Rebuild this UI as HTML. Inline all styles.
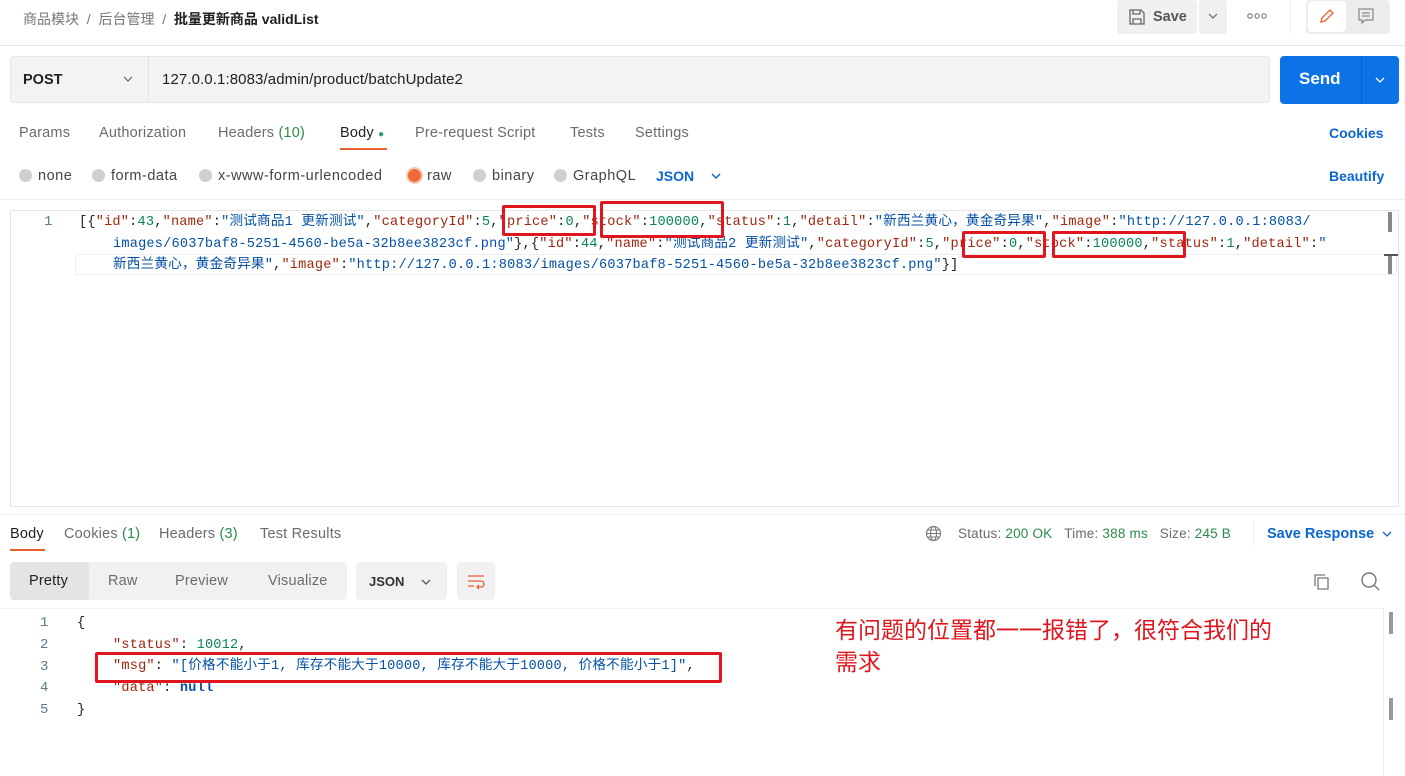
<!DOCTYPE html>
<html><head><meta charset="utf-8"><style>
*{margin:0;padding:0;box-sizing:border-box}
body{width:1405px;height:776px;background:#fff;font-family:"Liberation Sans","Noto Sans CJK SC",sans-serif;position:relative;overflow:hidden;color:#212121}
.a{position:absolute;white-space:nowrap}
.g{color:#6b6b6b}
.t{font-size:14.5px;letter-spacing:0.2px}
.r{font-size:14.5px;letter-spacing:0.5px;color:#444;line-height:16px}
.code{font-family:"Liberation Mono","Noto Sans CJK SC",monospace;font-size:13.6px;letter-spacing:0.2px;line-height:18px;height:18px}
.k{color:#a1260d}.s{color:#0451a5}.n{color:#098658}.b{color:#0451a5;font-weight:bold}
.box{position:absolute;border:3px solid #e0161e;border-radius:2px}
.ln{color:#5b7a8a;font-family:"Liberation Mono",monospace;font-size:14px}
.rad{display:inline-block;width:13px;height:13px;border-radius:50%;background:#cfcfcf;vertical-align:-2px;margin-right:6px}
</style></head><body>
<div class="a" style="left:23px;top:9px;font-size:14px;color:#777">商品模块 &nbsp;/&nbsp; 后台管理 &nbsp;/&nbsp; <b style="color:#212121">批量更新商品 validList</b></div>
<div class="a" style="left:1117px;top:0;width:80px;height:34px;background:#f0f0f0;border-radius:3px"></div>
<svg class="a" style="left:1128px;top:8px" width="18" height="18" viewBox="0 0 18 18"><path d="M2 2h11l3 3v11H2z M5 2v4h7V2 M5 16v-5h8v5" fill="none" stroke="#666" stroke-width="1.3"/></svg>
<div class="a" style="left:1153px;top:9px;font-size:14.5px;font-weight:bold;color:#555">Save</div>
<div class="a" style="left:1199px;top:0;width:28px;height:34px;background:#f0f0f0;border-radius:3px"></div>
<svg class="a" style="left:1207px;top:12px" width="12" height="8" viewBox="0 0 12 8"><path d="M2 2l4 4 4-4" fill="none" stroke="#666" stroke-width="1.2"/></svg>
<svg class="a" style="left:1247px;top:13px" width="20" height="6" viewBox="0 0 20 6"><g fill="none" stroke="#666" stroke-width="1"><circle cx="3" cy="3" r="2.2"/><circle cx="10" cy="3" r="2.2"/><circle cx="17" cy="3" r="2.2"/></g></svg>
<div class="a" style="left:1290px;top:0;width:1px;height:34px;background:#eee"></div>
<div class="a" style="left:1306px;top:0;width:84px;height:34px;background:#ececec;border-radius:4px"></div>
<div class="a" style="left:1308px;top:1px;width:38px;height:31px;background:#fff;border-radius:4px"></div>
<svg class="a" style="left:1318px;top:7px" width="18" height="18" viewBox="0 0 18 18"><path d="M3 15l1-4 8-8 3 3-8 8z" fill="none" stroke="#e8622f" stroke-width="1.3"/></svg>
<svg class="a" style="left:1357px;top:7px" width="18" height="18" viewBox="0 0 18 18"><path d="M2 2h14v11H8l-3 3v-3H2z M5 6h8 M5 9h8" fill="none" stroke="#888" stroke-width="1.2"/></svg>
<div class="a" style="left:0;top:45px;width:1405px;height:1px;background:#e6e6e6"></div>
<div class="a" style="left:10px;top:56px;width:1260px;height:47px;background:#f3f3f3;border:1px solid #e6e6e6;border-radius:4px"></div>
<div class="a" style="left:148px;top:56px;width:1px;height:47px;background:#e2e2e2"></div>
<div class="a" style="left:23px;top:72px;font-size:14.5px;font-weight:bold">POST</div>
<svg class="a" style="left:122px;top:75px" width="12" height="8" viewBox="0 0 12 8"><path d="M2 2l4 4 4-4" fill="none" stroke="#666" stroke-width="1.2"/></svg>
<div class="a" style="left:162px;top:71px;font-size:15px;letter-spacing:0.1px">127.0.0.1:8083/admin/product/batchUpdate2</div>
<div class="a" style="left:1280px;top:56px;width:119px;height:48px;background:#0c73e6;border-radius:4px"></div>
<div class="a" style="left:1361px;top:56px;width:1px;height:48px;background:#0a5fc0"></div>
<div class="a" style="left:1299px;top:69px;font-size:17px;font-weight:bold;color:#fff">Send</div>
<svg class="a" style="left:1374px;top:76px" width="12" height="8" viewBox="0 0 12 8"><path d="M2 2l4 4 4-4" fill="none" stroke="#fff" stroke-width="1.3"/></svg>
<div class="a g t" style="left:19px;top:125px">Params</div>
<div class="a g t" style="left:99px;top:125px">Authorization</div>
<div class="a g t" style="left:218px;top:125px">Headers <span style="color:#2a8a4a">(10)</span></div>
<div class="a t" style="left:340px;top:125px">Body <span style="color:#25a55f;font-size:10px">●</span></div>
<div class="a" style="left:340px;top:148px;width:47px;height:2px;background:#e8622f"></div>
<div class="a g t" style="left:415px;top:125px">Pre-request Script</div>
<div class="a g t" style="left:570px;top:125px">Tests</div>
<div class="a g t" style="left:635px;top:125px">Settings</div>
<div class="a" style="left:1329px;top:125px;font-size:14px;font-weight:bold;color:#0b67d0">Cookies</div>
<div class="a r" style="left:19px;top:168px"><span class="rad"></span>none</div>
<div class="a r" style="left:92px;top:168px"><span class="rad"></span>form-data</div>
<div class="a r" style="left:199px;top:168px"><span class="rad"></span>x-www-form-urlencoded</div>
<div class="a r" style="left:408px;top:168px"><span class="rad" style="background:#f06a35;box-shadow:0 0 0 2px #f6c9b6"></span>raw</div>
<div class="a r" style="left:473px;top:168px"><span class="rad"></span>binary</div>
<div class="a r" style="left:554px;top:168px"><span class="rad"></span>GraphQL</div>
<div class="a" style="left:656px;top:168px;font-size:14px;font-weight:bold;color:#0b67d0">JSON</div>
<svg class="a" style="left:710px;top:172px" width="12" height="8" viewBox="0 0 12 8"><path d="M2 2l4 4 4-4" fill="none" stroke="#0b67d0" stroke-width="1.5"/></svg>
<div class="a" style="left:1329px;top:168px;font-size:14px;font-weight:bold;color:#0b67d0">Beautify</div>
<div class="a" style="left:0;top:199px;width:1405px;height:1px;background:#eee"></div>
<div class="a" style="left:10px;top:210px;width:1389px;height:297px;border:1px solid #e6e6e6"></div>
<div class="a" style="left:75px;top:254px;width:1322px;height:21px;border:1px solid #eee"></div>
<div class="a" style="left:1388px;top:212px;width:4px;height:20px;background:#888"></div>
<div class="a" style="left:1384px;top:254px;width:14px;height:2px;background:#555"></div>
<div class="a" style="left:1388px;top:256px;width:4px;height:18px;background:#888"></div>
<div class="a ln" style="left:44px;top:214px">1</div>
<div class="a code" style="left:79px;top:214px">[{<span class="k">"id"</span>:<span class="n">43</span>,<span class="k">"name"</span>:<span class="s">"测试商品1 更新测试"</span>,<span class="k">"categoryId"</span>:<span class="n">5</span>,<span class="k">"price"</span>:<span class="n">0</span>,<span class="k">"stock"</span>:<span class="n">100000</span>,<span class="k">"status"</span>:<span class="n">1</span>,<span class="k">"detail"</span>:<span class="s">"新西兰黄心，黄金奇异果"</span>,<span class="k">"image"</span>:<span class="s">"http://127.0.0.1:8083/</span></div>
<div class="a code" style="left:113px;top:236px"><span class="s">images/6037baf8-5251-4560-be5a-32b8ee3823cf.png"</span>},{<span class="k">"id"</span>:<span class="n">44</span>,<span class="k">"name"</span>:<span class="s">"测试商品2 更新测试"</span>,<span class="k">"categoryId"</span>:<span class="n">5</span>,<span class="k">"price"</span>:<span class="n">0</span>,<span class="k">"stock"</span>:<span class="n">100000</span>,<span class="k">"status"</span>:<span class="n">1</span>,<span class="k">"detail"</span>:<span class="s">"</span></div>
<div class="a code" style="left:113px;top:257px"><span class="s">新西兰黄心，黄金奇异果"</span>,<span class="k">"image"</span>:<span class="s">"http://127.0.0.1:8083/images/6037baf8-5251-4560-be5a-32b8ee3823cf.png"</span>}]</div>
<div class="box" style="left:502px;top:205px;width:94px;height:31px"></div>
<div class="box" style="left:600px;top:201px;width:124px;height:37px"></div>
<div class="box" style="left:962px;top:231px;width:84px;height:27px"></div>
<div class="box" style="left:1052px;top:231px;width:134px;height:27px"></div>
<div class="a" style="left:0;top:514px;width:1405px;height:1px;background:#eee"></div>
<div class="a t" style="left:10px;top:526px">Body</div>
<div class="a" style="left:10px;top:549px;width:35px;height:2px;background:#e8622f"></div>
<div class="a g t" style="left:64px;top:526px">Cookies <span style="color:#2a8a4a">(1)</span></div>
<div class="a g t" style="left:159px;top:526px">Headers <span style="color:#2a8a4a">(3)</span></div>
<div class="a g t" style="left:260px;top:526px">Test Results</div>
<svg class="a" style="left:925px;top:525px" width="17" height="17" viewBox="0 0 17 17"><g fill="none" stroke="#777" stroke-width="1.1"><circle cx="8.5" cy="8.5" r="7"/><ellipse cx="8.5" cy="8.5" rx="3" ry="7"/><path d="M1.5 8.5h14M3 5h11M3 12h11"/></g></svg>
<div class="a g" style="left:958px;top:526px;font-size:13.5px;letter-spacing:0.2px">Status: <span style="color:#2a8a4a">200 OK</span> &nbsp;&nbsp;Time: <span style="color:#2a8a4a">388 ms</span> &nbsp;&nbsp;Size: <span style="color:#2a8a4a">245 B</span></div>
<div class="a" style="left:1253px;top:520px;width:1px;height:26px;background:#eee"></div>
<div class="a" style="left:1267px;top:526px;font-size:14.5px;font-weight:bold;color:#0b67d0">Save Response</div>
<svg class="a" style="left:1381px;top:530px" width="12" height="8" viewBox="0 0 12 8"><path d="M2 2l4 4 4-4" fill="none" stroke="#0b67d0" stroke-width="1.3"/></svg>
<div class="a" style="left:10px;top:562px;width:337px;height:38px;background:#f1f1f1;border-radius:4px"></div>
<div class="a" style="left:10px;top:562px;width:79px;height:38px;background:#e4e4e4;border-radius:4px"></div>
<div class="a t" style="left:29px;top:573px">Pretty</div>
<div class="a g t" style="left:108px;top:573px">Raw</div>
<div class="a g t" style="left:175px;top:573px">Preview</div>
<div class="a g t" style="left:268px;top:573px">Visualize</div>
<div class="a" style="left:356px;top:562px;width:91px;height:38px;background:#f1f1f1;border-radius:4px"></div>
<div class="a" style="left:369px;top:574px;font-size:13px;font-weight:bold;color:#333">JSON</div>
<svg class="a" style="left:420px;top:578px" width="12" height="8" viewBox="0 0 12 8"><path d="M2 2l4 4 4-4" fill="none" stroke="#555" stroke-width="1.3"/></svg>
<div class="a" style="left:457px;top:562px;width:38px;height:38px;background:#f1f1f1;border-radius:4px"></div>
<svg class="a" style="left:466px;top:572px" width="20" height="18" viewBox="0 0 20 18"><path d="M2 4h16M2 9h13a3 3 0 0 1 0 6h-4M13 13l-2 2 2 2M2 14h6" fill="none" stroke="#e8622f" stroke-width="1.3"/></svg>
<svg class="a" style="left:1312px;top:572px" width="20" height="20" viewBox="0 0 20 20"><path d="M6 6h10v11H6z M3 14V3h10" fill="none" stroke="#777" stroke-width="1.3"/></svg>
<svg class="a" style="left:1360px;top:571px" width="22" height="22" viewBox="0 0 22 22"><circle cx="9" cy="9" r="7" fill="none" stroke="#777" stroke-width="1.4"/><path d="M14 14l5 5" stroke="#777" stroke-width="1.4"/></svg>
<div class="a" style="left:0;top:608px;width:1383px;height:1px;background:#f3f3f3"></div>
<div class="a" style="left:1383px;top:608px;width:1px;height:168px;background:#eee"></div>
<div class="a" style="left:1389px;top:612px;width:4px;height:22px;background:#999"></div>
<div class="a" style="left:1389px;top:698px;width:4px;height:22px;background:#999"></div>
<div class="a ln" style="left:40px;top:615px">1</div>
<div class="a ln" style="left:40px;top:637px">2</div>
<div class="a ln" style="left:40px;top:659px">3</div>
<div class="a ln" style="left:40px;top:680px">4</div>
<div class="a ln" style="left:40px;top:702px">5</div>
<div class="a code" style="left:77px;top:615px">{</div>
<div class="a code" style="left:113px;top:637px"><span class="k">"status"</span>: <span class="n">10012</span>,</div>
<div class="a code" style="left:113px;top:658px"><span class="k">"msg"</span>: <span class="s">"[价格不能小于1, 库存不能大于10000, 库存不能大于10000, 价格不能小于1]"</span>,</div>
<div class="a code" style="left:113px;top:680px"><span class="k">"data"</span>: <span class="b">null</span></div>
<div class="a code" style="left:77px;top:702px">}</div>
<div class="box" style="left:95px;top:652px;width:627px;height:31px"></div>
<div class="a" style="left:835px;top:614px;font-size:23px;line-height:32px;color:#e0161e">有问题的位置都一一报错了，很符合我们的<br>需求</div>
</body></html>
